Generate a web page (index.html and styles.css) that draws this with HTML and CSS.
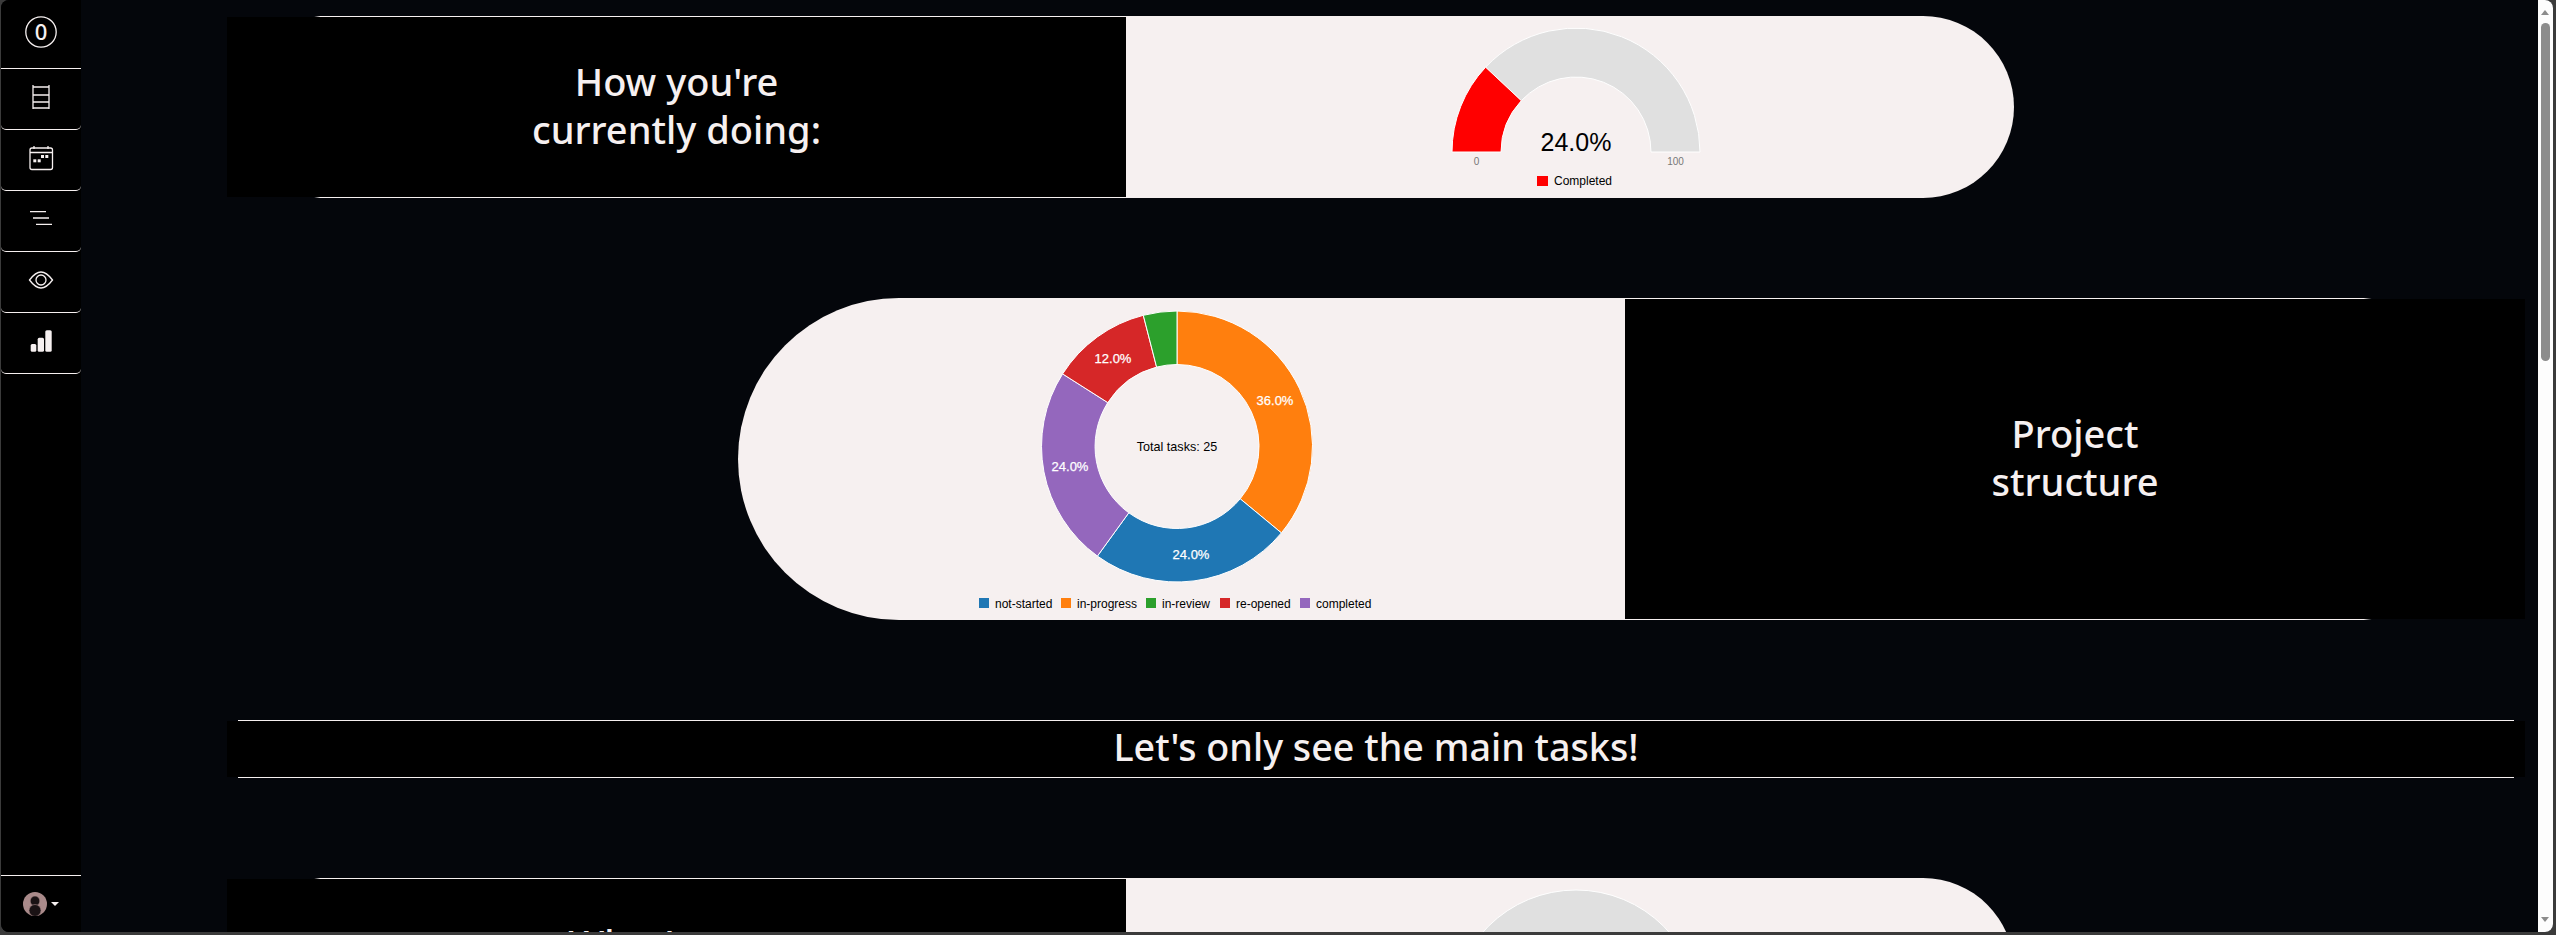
FILE: index.html
```html
<!DOCTYPE html>
<html lang="en">
<head>
    <meta charset="UTF-8">
    <meta name="viewport" content="width=device-width, initial-scale=1.0">
    <title>Dashboard</title>
    <link rel="stylesheet" href="styles.css">
</head>
<body>
    <div class="window">
        <nav class="sidebar">
            <a class="nav-item nav-first">
                <svg class="nav-icon" viewBox="0 0 32 32">
                    <circle cx="16" cy="16" r="15.200"/>
                    <text class="nav-count" x="16" y="24">0</text>
                </svg>
            </a>
            <a class="nav-item">
                <svg class="nav-icon" viewBox="0 0 32 32">
                    <path d="M8 4V28M24 4V28M8 6H24M8 14H24M8 21H24M8 27H24"/>
                </svg>
            </a>
            <a class="nav-item">
                <svg class="nav-icon" viewBox="0 0 32 32">
                    <rect x="5" y="6" width="22.500" height="21.500" rx="2"/>
                    <path d="M9 4V7M23 4V7M5 10.500H27.500"/>
                    <rect class="solid" x="8.300" y="17.300" width="3" height="3"/>
                    <rect class="solid" x="12.700" y="17.300" width="3" height="3"/>
                    <rect class="solid" x="16" y="13" width="3" height="3"/>
                    <rect class="solid" x="20.300" y="13" width="3" height="3"/>
                </svg>
            </a>
            <a class="nav-item">
                <svg class="nav-icon" viewBox="0 0 32 32">
                    <path d="M5 8.700H21M8 15H24M11 21.300H27"/>
                </svg>
            </a>
            <a class="nav-item">
                <svg class="nav-icon" viewBox="0 0 32 32">
                    <path d="M4.500 16C9 10 12 8 16 8S23 10 27.500 16C23 22 20 24 16 24S9 22 4.500 16Z"/>
                    <circle cx="16" cy="16" r="5"/>
                </svg>
            </a>
            <a class="nav-item">
                <svg class="nav-icon" viewBox="0 0 32 32">
                    <rect class="solid" x="5.700" y="19" width="5.600" height="7.700" rx="1.500"/>
                    <rect class="solid" x="12.700" y="12.700" width="6.300" height="14" rx="1.500"/>
                    <rect class="solid" x="20.300" y="5.300" width="6.400" height="21.400" rx="1.500"/>
                </svg>
            </a>
            <div class="profile">
                <svg class="avatar" viewBox="0 0 24 24">
                    <circle class="avatar-bg" cx="12" cy="12" r="12"/>
                    <ellipse class="avatar-fg" cx="12" cy="9" rx="4.800" ry="5"/>
                    <circle class="avatar-fg" cx="12" cy="18.500" r="6"/>
                </svg>
                <span class="caret"></span>
            </div>
        </nav>

        <main class="main">
            <section class="row">
                <div class="row-label">
                    <div class="label-inner fade-left">
                        <h2>How you're<br>currently doing:</h2>
                    </div>
                </div>
                <div class="row-chart pill-right">
                    <svg class="chart" width="888" height="182" viewBox="0 0 888 182">
                        <path class="gauge-empty" d="M359.600 51.200A124 124 0 0 1 574 136H525A75 75 0 0 0 395.300 84.700Z"/>
                        <path class="gauge-fill" d="M326 136A124 124 0 0 1 359.600 51.200L395.300 84.700A75 75 0 0 0 375 136Z"/>
                        <text class="gauge-value" x="450" y="135">24.0%</text>
                        <text class="gauge-tick" x="350.500" y="149">0</text>
                        <text class="gauge-tick" x="549.500" y="149">100</text>
                        <rect class="gauge-key" x="411" y="160" width="11" height="10"/>
                        <text class="legend-text" x="428" y="169">Completed</text>
                    </svg>
                </div>
            </section>

            <section class="row row-right">
                <div class="row-chart pill-left">
                    <svg class="chart" width="887" height="322" viewBox="0 0 887 322">
                        <path class="slice orange" d="M439 13A135.500 135.500 0 0 1 543.400 234.900L502.200 200.800A82 82 0 0 0 439 66.500Z"/>
                        <path class="slice blue" d="M543.400 234.900A135.500 135.500 0 0 1 359.400 258.100L390.800 214.800A82 82 0 0 0 502.200 200.800Z"/>
                        <path class="slice purple" d="M359.400 258.100A135.500 135.500 0 0 1 324.600 75.900L369.800 104.600A82 82 0 0 0 390.800 214.800Z"/>
                        <path class="slice red" d="M324.600 75.900A135.500 135.500 0 0 1 405.300 17.300L418.600 69.100A82 82 0 0 0 369.800 104.600Z"/>
                        <path class="slice green" d="M405.300 17.300A135.500 135.500 0 0 1 439 13V66.500A82 82 0 0 0 418.600 69.100Z"/>
                        <text class="slice-text" x="537" y="107">36.0%</text>
                        <text class="slice-text" x="453" y="261">24.0%</text>
                        <text class="slice-text" x="332" y="173">24.0%</text>
                        <text class="slice-text" x="375" y="65">12.0%</text>
                        <text class="donut-title" x="439" y="153">Total tasks: 25</text>
                        <rect class="blue" x="241" y="300" width="10" height="10"/>
                        <text class="legend-text" x="257" y="310">not-started</text>
                        <rect class="orange" x="323" y="300" width="10" height="10"/>
                        <text class="legend-text" x="339" y="310">in-progress</text>
                        <rect class="green" x="408" y="300" width="10" height="10"/>
                        <text class="legend-text" x="424" y="310">in-review</text>
                        <rect class="red" x="482" y="300" width="10" height="10"/>
                        <text class="legend-text" x="498" y="310">re-opened</text>
                        <rect class="purple" x="562" y="300" width="10" height="10"/>
                        <text class="legend-text" x="578" y="310">completed</text>
                    </svg>
                </div>
                <div class="row-label">
                    <div class="label-inner fade-right">
                        <h2>Project<br>structure</h2>
                    </div>
                </div>
            </section>

            <div class="banner">
                <div class="banner-inner">
                    <h1>Let's only see the main tasks!</h1>
                </div>
            </div>

            <section class="row">
                <div class="row-label">
                    <div class="label-inner fade-left">
                        <h2>What's your<br>progress</h2>
                    </div>
                </div>
                <div class="row-chart pill-right">
                    <svg class="chart" width="888" height="182" viewBox="0 0 888 182">
                        <path class="gauge-empty" d="M326 136A124 124 0 0 1 574 136H525A75 75 0 0 0 375 136Z"/>
                    </svg>
                </div>
            </section>
        </main>

        <div class="scrollbar">
            <span class="arrow-up"></span>
            <span class="thumb"></span>
            <span class="arrow-down"></span>
        </div>
    </div>
</body>
</html>
```

FILE: styles.css
```css
html, body {
    margin: 0;
    padding: 0;
    height: 100%;
    overflow: hidden;
    background-color: #3b3b3b;
}
.window {
    display: flex;
    width: 2552px;
    height: 932px;
    margin-left: 1px;
    overflow: hidden;
    background-color: #04060b;
    border-radius: 8px;
    font-family: "Liberation Sans", Arial, sans-serif;
}

/* sidebar */
.sidebar {
    display: flex;
    flex-direction: column;
    flex: 0 0 80px;
    background-color: #000;
}
.nav-item {
    display: block;
    height: 60px;
    border-bottom: 1px solid #f6f0f0;
    border-radius: 0 0 5px 5px;
    text-align: center;
}
.nav-first {
    height: 68px;
    border-radius: 0;
}
.nav-icon {
    display: block;
    width: 32px;
    height: 32px;
    margin: 12px auto 0;
    fill: none;
    stroke: #f6f0f0;
    stroke-width: 1.3;
}
.nav-first .nav-icon {
    margin-top: 16px;
}
.nav-icon .solid {
    fill: #f6f0f0;
    stroke: none;
}
.nav-count {
    font-family: "Noto Sans", sans-serif;
    font-size: 22px;
    font-weight: 500;
    text-anchor: middle;
    fill: #f6f0f0;
    stroke: none;
}
.profile {
    display: flex;
    align-items: center;
    gap: 4px;
    margin-top: auto;
    height: 56px;
    padding-left: 22px;
    border-top: 1px solid #f6f0f0;
}
.avatar {
    width: 24px;
    height: 24px;
}
.avatar-bg {
    fill: #a98a8a;
}
.avatar-fg {
    fill: #1a1214;
    stroke: #a98a8a;
    stroke-width: 0.6;
}
.caret {
    border-top: 4px solid #f6f0f0;
    border-left: 4px solid transparent;
    border-right: 4px solid transparent;
}

/* main column */
.main {
    display: flex;
    flex-direction: column;
    gap: 100px;
    flex: 1;
    min-width: 0;
    padding: 16px 13px 0 146px;
}
.row {
    display: flex;
    flex: 0 0 182px;
    width: 1787px;
}
.row-right {
    flex-basis: 322px;
    align-self: flex-end;
}
.row-label {
    flex: 0 0 899px;
    margin: 1px 0;
    background-color: #000;
}
.row-right .row-label {
    flex-basis: 900px;
}
.label-inner {
    display: flex;
    align-items: center;
    justify-content: center;
    box-sizing: border-box;
    height: calc(100% + 2px);
    margin: -1px 0;
    padding-bottom: 4px;
    border-style: solid;
    border-width: 1px 0;
    text-align: center;
}
.fade-left {
    border-image: linear-gradient(to right, transparent 88px, #f6f0f0 94px) 1;
}
.fade-right {
    border-image: linear-gradient(to left, transparent 154px, #f6f0f0 162px) 1;
}
h1, h2 {
    margin: 0;
    color: #f6f0f0;
    font-family: "Noto Sans", sans-serif;
    font-size: 38px;
    font-weight: 500;
    line-height: 48px;
}
h1 {
    font-size: 37.700px;
}
.row-chart {
    flex: 1;
    min-width: 0;
    background-color: #f6f0f0;
}
.pill-right {
    border-radius: 0 91px 91px 0;
}
.pill-left {
    border-radius: 161px 0 0 161px;
}
.chart {
    display: block;
}

/* banner */
.banner {
    flex: 0 0 56px;
    margin: 1px 0;
    background-color: #000;
}
.banner-inner {
    height: 56px;
    margin: -1px 11px;
    border-top: 1px solid #f6f0f0;
    border-bottom: 1px solid #f6f0f0;
    text-align: center;
}
.banner-inner h1 {
    padding-top: 2px;
}

/* charts */
.gauge-empty {
    fill: #e0e0e0;
    stroke: #fff;
}
.gauge-fill {
    fill: #f00;
    stroke: #fff;
}
.gauge-value {
    font-size: 25px;
    text-anchor: middle;
    fill: #000;
}
.gauge-tick {
    font-size: 10px;
    text-anchor: middle;
    fill: #777;
}
.gauge-key {
    fill: #f00;
}
.legend-text {
    font-size: 12px;
    fill: #000;
}
.slice {
    stroke: #fff;
}
.slice-text {
    font-size: 13px;
    text-anchor: middle;
    fill: #fff;
    stroke: #fff;
    stroke-width: 0.25;
}
.donut-title {
    font-size: 12.600px;
    text-anchor: middle;
    fill: #000;
}
.orange { fill: #ff7f0e; }
.blue { fill: #1f77b4; }
.green { fill: #2ca02c; }
.red { fill: #d62728; }
.purple { fill: #9467bd; }

/* scrollbar */
.scrollbar {
    position: relative;
    flex: 0 0 15px;
    background-color: #fdfdfd;
}
.thumb {
    position: absolute;
    top: 23px;
    left: 3px;
    width: 9px;
    height: 338px;
    border-radius: 5px;
    background-color: #8c8c8c;
}
.arrow-up, .arrow-down {
    position: absolute;
    left: 3px;
    border-left: 4.500px solid transparent;
    border-right: 4.500px solid transparent;
}
.arrow-up {
    top: 10px;
    border-bottom: 5px solid #8c8c8c;
}
.arrow-down {
    top: 917px;
    border-top: 5px solid #8c8c8c;
}
```
